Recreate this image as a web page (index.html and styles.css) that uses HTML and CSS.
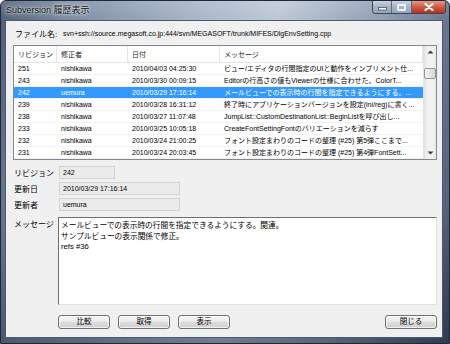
FILE: index.html
```html
<!DOCTYPE html>
<html lang="ja">
    <head>
        <meta charset="UTF-8">
        <title>Subversion 履歴表示</title>
        <link rel="stylesheet" href="styles.css">
    </head>
    <body>
        <div class="window">
            <div class="titlebar">
                <span class="title">Subversion 履歴表示</span>
                <div class="capbtns">
                    <span class="cap min"><svg width="9" height="4" viewBox="0 0 9 4"><rect x="0.5" y="0.5" width="8" height="2.5" fill="#fff" stroke="#4a5568" stroke-width="0.8"/></svg></span>
                    <span class="cap max"><svg width="9" height="7" viewBox="0 0 9 7"><rect x="1" y="1" width="7" height="5" fill="none" stroke="#fff" stroke-width="1.6"/></svg></span>
                    <span class="cap close"><svg width="10" height="8" viewBox="0 0 10 8"><path d="M1.5 1 L8.5 7 M8.5 1 L1.5 7" stroke="#fff" stroke-width="2.2" stroke-linecap="round"/></svg></span>
                </div>
            </div>
            <div class="client">
                <div class="filerow">
                    <span class="filelabel">ファイル名:</span>
                    <span class="filepath">svn+ssh://source.megasoft.co.jp:444/svn/MEGASOFT/trunk/MIFES/DlgEnvSetting.cpp</span>
                </div>

                <div class="list">
                    <div class="listbody">
                        <div class="row head">
                            <span>リビジョン</span><span>修正者</span><span>日付</span><span>メッセージ</span>
                        </div>
                        <div class="row">
                            <span>251</span><span>nishikawa</span><span>2010/04/03 04:25:30</span><span>ビュー/エディタの行間指定のUIと動作をインプリメント仕...</span>
                        </div>
                        <div class="row">
                            <span>243</span><span>nishikawa</span><span>2010/03/30 00:09:15</span><span>Editorの行高さの値もViewerの仕様に合わせた。ColorT...</span>
                        </div>
                        <div class="row selected">
                            <span>242</span><span>uemura</span><span>2010/03/29 17:16:14</span><span>メールビューでの表示時の行間を指定できるようにする。...</span>
                        </div>
                        <div class="row">
                            <span>239</span><span>nishikawa</span><span>2010/03/28 16:31:12</span><span>終了時にアプリケーションバージョンを設定(ini/reg)に書く...</span>
                        </div>
                        <div class="row">
                            <span>238</span><span>nishikawa</span><span>2010/03/27 11:07:48</span><span>JumpList::CustomDestinationList::BeginListを呼び出し...</span>
                        </div>
                        <div class="row">
                            <span>233</span><span>nishikawa</span><span>2010/03/25 10:05:18</span><span>CreateFontSettingFontのバリエーションを減らす</span>
                        </div>
                        <div class="row">
                            <span>232</span><span>nishikawa</span><span>2010/03/24 21:00:25</span><span>フォント設定まわりのコードの整理 (#25) 第5弾ここまで...</span>
                        </div>
                        <div class="row">
                            <span>231</span><span>nishikawa</span><span>2010/03/24 20:03:45</span><span>フォント設定まわりのコードの整理 (#25) 第4弾FontSett...</span>
                        </div>
                    </div>
                    <div class="scrollbar">
                        <div class="sbbtn"><svg width="7" height="4" viewBox="0 0 7 4"><path d="M0.5 3.5 L3.5 0.5 L6.5 3.5 Z" fill="#3c3c3c"/></svg></div>
                        <div class="sbtrack"><div class="sbthumb"></div></div>
                        <div class="sbbtn"><svg width="7" height="4" viewBox="0 0 7 4"><path d="M0.5 0.5 L3.5 3.5 L6.5 0.5 Z" fill="#3c3c3c"/></svg></div>
                    </div>
                </div>

                <div class="details">
                    <div class="detailrow">
                        <span class="label">リビジョン</span>
                        <div class="field short">242</div>
                    </div>
                    <div class="detailrow">
                        <span class="label">更新日</span>
                        <div class="field">2010/03/29 17:16:14</div>
                    </div>
                    <div class="detailrow">
                        <span class="label">更新者</span>
                        <div class="field">uemura</div>
                    </div>
                    <div class="detailrow memorow">
                        <span class="label">メッセージ</span>
                        <div class="memo">メールビューでの表示時の行間を指定できるようにする。関連。<br>サンプルビューの表示関係で修正。<br>refs #36</div>
                    </div>
                </div>

                <div class="buttons">
                    <a href="javascript:;" class="btn">比較</a>
                    <a href="javascript:;" class="btn">取得</a>
                    <a href="javascript:;" class="btn">表示</a>
                    <a href="javascript:;" class="btn close-btn">閉じる</a>
                </div>
            </div>
        </div>
    </body>
</html>
```

FILE: styles.css
```css
*{
    padding: 0px;
    margin: 0px;
    box-sizing: border-box;
}
body{
    width: 450px;
    height: 344px;
    overflow: hidden;
    background: #fff;
    font-family: "Liberation Sans", "Noto Sans CJK JP", sans-serif;
    color: #000;
}
.window{
    width: 450px;
    height: 344px;
    border: 1px solid #1e2838;
    border-radius: 6px 6px 0 0;
    display: flex;
    flex-direction: column;
    background:
        linear-gradient(to bottom, rgba(255,255,255,0.15), rgba(255,255,255,0) 20px, rgba(20,32,52,0) 60%, rgba(20,32,52,0.45)),
        linear-gradient(100deg, #4f5f77 0%, #7a8ba3 14%, #a6b4c7 38%, #bcc7d6 55%, #8d9cb2 76%, #44536b 100%);
}
.titlebar{
    height: 19px;
    display: flex;
    align-items: flex-start;
}
.title{
    flex: 1;
    padding-left: 5px;
    font-size: 9px;
    line-height: 18px;
    color: #111;
    text-shadow: 0 0 5px rgba(255,255,255,0.9), 0 0 2px rgba(255,255,255,0.9);
}
.capbtns{
    display: flex;
    margin-right: 3px;
    height: 13px;
    border: 1px solid #3a4658;
    border-top: none;
    border-radius: 0 0 4px 4px;
    overflow: hidden;
}
.cap{
    display: flex;
    align-items: center;
    justify-content: center;
    height: 100%;
}
.cap.min{
    width: 19px;
    border-right: 1px solid #5d6a7c;
    background: linear-gradient(#c9d3e0, #a6b3c5 50%, #95a4b8);
}
.cap.min svg{
    margin-top: 4px;
}
.cap.max{
    width: 20px;
    border-right: 1px solid #5d6a7c;
    background: linear-gradient(#c9d3e0, #a6b3c5 50%, #95a4b8);
}
.cap.close{
    width: 33px;
    background: linear-gradient(#e39a88, #cf5a44 50%, #b5301d);
}
.client{
    flex: 1;
    margin: 0 6px 5px 4px;
    background: #f0f0f0;
    border: 1px solid #4c596c;
    padding: 7px 5px 8px 7px;
    display: flex;
    flex-direction: column;
    font-size: 7px;
}
.filerow{
    height: 10px;
    display: flex;
    align-items: center;
    white-space: nowrap;
    padding-left: 2px;
    margin-bottom: 7px;
}
.filelabel{
    width: 48px;
    font-size: 8px;
}
.filepath{
    font-size: 7px;
}
.list{
    height: 115px;
    border: 1px solid #828790;
    background: #fff;
    display: flex;
}
.listbody{
    flex: 1;
}
.row{
    display: grid;
    grid-template-columns: 43px 71px 92px 203px;
    height: 12px;
    align-items: center;
    border-bottom: 1px solid #f3f3f3;
    white-space: nowrap;
}
.row span{
    overflow: hidden;
    padding-left: 4px;
    line-height: 11px;
}
.row span:last-child{
    padding-right: 4px;
}
.row.head{
    height: 17px;
    border-bottom: 1px solid #e5e5e5;
    color: #1e1e1e;
}
.row.head span{
    height: 17px;
    line-height: 17px;
    border-right: 1px solid #e5e5e5;
}
.row.selected{
    background: #3399ff;
    color: #fff;
}
.scrollbar{
    width: 13px;
    display: flex;
    flex-direction: column;
    background: linear-gradient(90deg, #e3e3e3, #f2f2f2 30%, #f2f2f2 70%, #e8e8e8);
    border-left: 1px solid #e2e2e2;
}
.sbbtn{
    height: 12px;
    display: flex;
    align-items: center;
    justify-content: center;
}
.sbtrack{
    flex: 1;
    padding-top: 10px;
}
.sbthumb{
    height: 11px;
    border: 1px solid #979797;
    border-radius: 2px;
    background: linear-gradient(90deg, #f3f3f3, #e6e6e6 50%, #d6d6d6);
}
.details{
    margin-top: 6px;
    display: flex;
    flex-direction: column;
    gap: 3px;
}
.detailrow{
    display: flex;
    align-items: center;
    height: 13px;
}
.label{
    width: 46px;
    flex: none;
    font-size: 8px;
    padding-left: 1px;
    white-space: nowrap;
}
.field{
    width: 121px;
    height: 13px;
    line-height: 11px;
    padding-left: 3px;
    background: #ebebeb;
    border: 1px solid #d3d3d3;
}
.field.short{
    width: 56px;
}
.memorow{
    height: auto;
    align-items: flex-start;
    margin-top: 3px;
}
.memorow .label{
    padding-top: 1px;
}
.memo{
    flex: 1;
    height: 88px;
    margin-left: -1px;
    background: #fff;
    border-top: 1px solid #6e6e6e;
    border-left: 1px solid #6e6e6e;
    border-right: 1px solid #e2e2e2;
    border-bottom: 1px solid #e2e2e2;
    padding: 3px 2px;
    font-size: 7.7px;
    line-height: 10.5px;
}
.buttons{
    margin-top: auto;
    padding-left: 45px;
    display: flex;
    gap: 8px;
}
.btn{
    width: 52px;
    height: 14px;
    border: 1px solid #707070;
    border-radius: 3px;
    background: linear-gradient(#f4f4f4, #ebebeb 45%, #dddddd 50%, #cfcfcf);
    box-shadow: inset 0 0 0 1px rgba(255,255,255,0.7);
    font-size: 7.5px;
    line-height: 12px;
    text-align: center;
    color: #000;
    text-decoration: none;
}
.close-btn{
    margin-left: auto;
}
```
